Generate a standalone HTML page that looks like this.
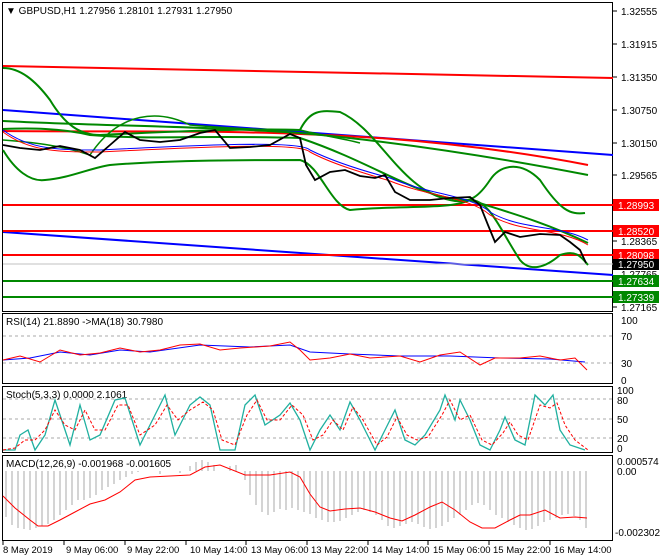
<!DOCTYPE html><html><head><style>
body{margin:0;background:#fff;width:660px;height:560px;overflow:hidden}
svg{display:block;font-family:"Liberation Sans",sans-serif;font-size:10px}
</style></head><body>
<svg width="660" height="560" viewBox="0 0 660 560">
<rect width="660" height="560" fill="#fff"/>
<g fill="none" stroke="#000" stroke-width="1">
<rect x="2.5" y="2.5" width="610" height="309"/>
<rect x="2.5" y="313.5" width="610" height="70"/>
<rect x="2.5" y="386.5" width="610" height="66"/>
<rect x="2.5" y="455.5" width="610" height="85"/>
</g>
<g stroke="#000"><line x1="613" y1="11" x2="617" y2="11"/><line x1="613" y1="44" x2="617" y2="44"/><line x1="613" y1="77" x2="617" y2="77"/><line x1="613" y1="110" x2="617" y2="110"/><line x1="613" y1="143" x2="617" y2="143"/><line x1="613" y1="175" x2="617" y2="175"/><line x1="613" y1="241" x2="617" y2="241"/><line x1="613" y1="307" x2="617" y2="307"/></g>
<g fill="#000">
<text x="621" y="15">1.32555</text><text x="621" y="48">1.31915</text><text x="621" y="81">1.31350</text><text x="621" y="114">1.30750</text><text x="621" y="147">1.30150</text><text x="621" y="179">1.29565</text><text x="621" y="245">1.28365</text><text x="621" y="278">1.27765</text><text x="621" y="311">1.27165</text>
</g>
<line x1="3" y1="66" x2="613" y2="78" stroke="#f00" stroke-width="2"/>
<line x1="3" y1="110" x2="613" y2="155" stroke="#00f" stroke-width="2"/>
<line x1="3" y1="232" x2="613" y2="275" stroke="#00f" stroke-width="2"/>
<line x1="3" y1="205" x2="613" y2="205" stroke="#f00" stroke-width="2"/>
<line x1="3" y1="231" x2="613" y2="231" stroke="#f00" stroke-width="2"/>
<line x1="3" y1="255" x2="613" y2="255" stroke="#f00" stroke-width="2"/>
<line x1="3" y1="264" x2="613" y2="264" stroke="#c0c0c0"/>
<line x1="3" y1="281" x2="613" y2="281" stroke="#080" stroke-width="2"/>
<line x1="3" y1="297" x2="613" y2="297" stroke="#080" stroke-width="2"/>
<path d="M3 131 C100 132 200 130 300 134 C400 137 500 148 588 165" stroke="#f00" stroke-width="2" fill="none"/>
<path d="M3 121 C100 126 200 126 300 133 C400 142 500 158 588 175" stroke="#080" stroke-width="2" fill="none"/>
<g stroke="#080" stroke-width="2" fill="none">
<path d="M3 68 C20 68 35 80 50 100 C65 125 80 135 100 135 C160 132 250 128 300 130 C310 110 320 110 340 112 C380 130 400 190 450 200 C470 205 480 195 490 180 C500 165 520 160 540 180 C560 210 570 215 585 213"/>
<path d="M3 150 C15 170 30 182 45 180 C70 178 90 168 110 165 C170 160 250 160 300 160 C320 165 330 205 350 210 C400 205 450 210 470 200 C490 200 500 230 520 260 C530 272 545 268 560 255 C575 250 580 255 588 265"/>
<path d="M3 129 C30 128 60 128 90 135 C150 140 200 135 300 138 C380 165 420 200 470 200 C500 210 540 220 588 243"/>
<path d="M3 140 C30 142 60 145 90 155 C120 110 160 110 190 125 C250 130 280 130 300 130 C320 135 350 140 360 143" stroke-width="1.5"/>
</g>
<path d="M3 130 C30 150 60 150 100 150 C200 145 300 140 310 150 C330 160 360 170 390 178 C430 195 470 195 490 212 C520 230 560 225 588 240" stroke="#00f" fill="none"/>
<path d="M3 132 C30 152 60 152 100 152 C200 147 300 142 310 152 C330 163 360 172 390 181 C430 197 470 197 490 215 C520 233 560 228 588 245" stroke="#f00" fill="none"/>
<path d="M3 145 L20 148 L40 150 L60 146 L80 150 L95 158 L110 145 L125 132 L140 140 L160 142 L180 140 L200 133 L215 130 L230 148 L250 147 L270 145 L290 134 L300 138 L306 165 L315 180 L330 172 L345 170 L360 176 L375 178 L385 175 L395 192 L410 200 L430 200 L450 198 L470 197 L480 205 L488 225 L495 242 L505 232 L520 237 L540 234 L560 235 L570 242 L580 250 L586 263" stroke="#000" stroke-width="1.8" fill="none"/>
<g font-size="10">
<rect x="613" y="199" width="46" height="12" fill="#f00"/><text x="618" y="209" fill="#fff">1.28993</text>
<rect x="613" y="225" width="46" height="12" fill="#f00"/><text x="618" y="235" fill="#fff">1.28520</text>
<rect x="613" y="249" width="46" height="12" fill="#f00"/><text x="618" y="259" fill="#fff">1.28098</text>
<rect x="613" y="259" width="46" height="11" fill="#000"/><text x="618" y="268" fill="#fff">1.27950</text>
<rect x="613" y="275" width="46" height="12" fill="#080"/><text x="618" y="285" fill="#fff">1.27634</text>
<rect x="613" y="291" width="46" height="12" fill="#080"/><text x="618" y="301" fill="#fff">1.27339</text>
</g>
<text x="6" y="14">▼ GBPUSD,H1  1.27956 1.28101 1.27931 1.27950</text>
<g stroke="#aaa" stroke-dasharray="3,3"><line x1="3" y1="336" x2="613" y2="336"/><line x1="3" y1="363" x2="613" y2="363"/></g>
<text x="6" y="325">RSI(14) 21.8890  -&gt;MA(18) 30.7980</text>
<text x="621" y="324">100</text><text x="621" y="340">70</text><text x="621" y="367">30</text><text x="621" y="384">0</text>
<path d="M3 360 L30 358 L60 352 L90 355 L120 350 L150 352 L200 345 L250 347 L290 345 L310 352 L350 354 L400 356 L450 356 L500 358 L550 359 L585 362" stroke="#00f" fill="none"/>
<path d="M3 360 L20 356 L40 362 L60 350 L80 355 L100 353 L120 348 L140 352 L160 350 L180 345 L200 344 L220 350 L240 348 L270 346 L290 342 L300 350 L310 360 L330 358 L350 354 L370 358 L400 356 L420 362 L440 355 L460 352 L480 365 L495 358 L520 358 L540 356 L560 360 L575 358 L587 370" stroke="#f00" fill="none"/>
<g stroke="#aaa" stroke-dasharray="3,3"><line x1="3" y1="399" x2="613" y2="399"/><line x1="3" y1="419" x2="613" y2="419"/><line x1="3" y1="438" x2="613" y2="438"/></g>
<text x="6" y="398">Stoch(5,3,3) 0.0000 2.1061</text>
<text x="617" y="394">100</text><text x="617" y="404">80</text><text x="617" y="423">50</text><text x="617" y="442">20</text><text x="617" y="452">0</text>
<path d="M3 450 L15 450 L20 435 L28 430 L35 450 L45 435 L55 400 L65 430 L70 445 L80 405 L90 440 L100 435 L115 400 L125 398 L140 445 L155 415 L165 395 L175 435 L190 405 L200 397 L210 405 L220 450 L235 450 L245 405 L255 395 L265 425 L280 415 L290 403 L300 420 L310 450 L320 430 L330 415 L340 430 L350 402 L360 420 L375 450 L385 430 L395 410 L405 440 L415 445 L425 435 L440 410 L445 395 L455 420 L460 400 L470 420 L480 445 L490 450 L500 430 L505 417 L515 440 L525 445 L535 395 L545 405 L553 395 L560 430 L570 445 L585 450" stroke="#20b0a0" stroke-width="1.3" fill="none"/>
<path d="M3 450 L15 448 L25 440 L35 440 L45 430 L55 410 L65 425 L75 430 L85 410 L95 430 L105 430 L118 405 L128 405 L140 435 L155 425 L167 405 L178 420 L190 410 L203 402 L213 410 L222 440 L235 445 L247 415 L257 400 L267 420 L280 420 L292 405 L303 415 L313 440 L323 435 L333 420 L343 430 L353 407 L363 420 L377 445 L387 437 L397 417 L407 435 L417 440 L428 437 L442 415 L450 400 L460 420 L470 415 L482 440 L492 445 L503 433 L510 422 L518 435 L528 440 L540 405 L550 408 L557 403 L565 425 L575 440 L588 450" stroke="#f00" stroke-dasharray="3,2" fill="none"/>
<text x="6" y="467">MACD(12,26,9) -0.001968 -0.001605</text>
<text x="617" y="465">0.000574</text><text x="617" y="475">0.00</text><text x="615" y="536">-0.002302</text>
<g stroke="#aaa" stroke-width="1">
<path d="M6 471V517M12 471V525M18 471V528M24 471V529M30 471V530M36 471V528M42 471V526M48 471V524M54 471V520M60 471V515M66 471V510M72 471V505M78 471V500M84 471V500M90 471V498M96 471V495M102 471V490M108 471V487M114 471V484M120 471V480M126 471V477M132 471V474M138 471V472M160 471V474M180 471V473M190 471V466M196 471V462M202 471V460M208 471V462M214 471V465M230 471V466M236 471V465M245 471V480M250 471V495M256 471V505M262 471V512M268 471V515M274 471V512M280 471V509M286 471V510M292 471V508M298 471V510M304 471V512M310 471V514M316 471V518M322 471V520M328 471V522M334 471V522M340 471V521M346 471V518M352 471V515M358 471V512M364 471V510M370 471V512M376 471V515M382 471V520M388 471V526M394 471V528M400 471V526M406 471V524M412 471V522M418 471V524M424 471V527M430 471V529M436 471V528M442 471V526M448 471V522M454 471V518M460 471V515M466 471V510M472 471V505M478 471V503M484 471V505M490 471V510M496 471V515M502 471V518M508 471V522M514 471V525M520 471V528M526 471V530M532 471V529M538 471V526M544 471V522M550 471V520M556 471V518M562 471V515M568 471V514M574 471V516M580 471V520M586 471V528"/>
</g>
<path d="M3 496 L15 508 L30 520 L38 526 L48 526 L60 520 L75 512 L90 504 L105 500 L120 492 L135 480 L150 477 L190 475 L205 467 L220 465 L245 475 L270 475 L290 472 L300 477 L310 494 L320 507 L330 511 L345 509 L360 508 L375 512 L390 518 L402 521 L415 515 L430 507 L442 502 L455 510 L470 522 L482 528 L495 528 L510 520 L520 515 L530 515 L545 510 L560 518 L575 517 L587 518" stroke="#f00" fill="none"/>
<g stroke="#000"><line x1="3" y1="541" x2="3" y2="545"/><line x1="64" y1="541" x2="64" y2="545"/><line x1="125" y1="541" x2="125" y2="545"/><line x1="186" y1="541" x2="186" y2="545"/><line x1="246" y1="541" x2="246" y2="545"/><line x1="307" y1="541" x2="307" y2="545"/><line x1="368" y1="541" x2="368" y2="545"/><line x1="428" y1="541" x2="428" y2="545"/><line x1="489" y1="541" x2="489" y2="545"/><line x1="550" y1="541" x2="550" y2="545"/></g>
<g font-size="9.5"><text x="3" y="553">8 May 2019</text><text x="66" y="553">9 May 06:00</text><text x="127" y="553">9 May 22:00</text><text x="190" y="553">10 May 14:00</text><text x="251" y="553">13 May 06:00</text><text x="311" y="553">13 May 22:00</text><text x="372" y="553">14 May 14:00</text><text x="433" y="553">15 May 06:00</text><text x="493" y="553">15 May 22:00</text><text x="554" y="553">16 May 14:00</text></g>
</svg></body></html>
